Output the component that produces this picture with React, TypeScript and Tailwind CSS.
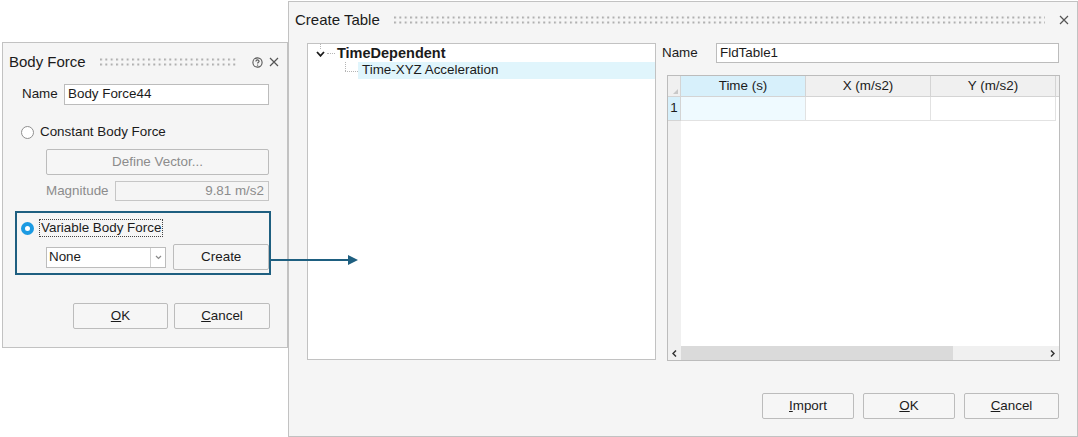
import React from 'react'

const font = { fontFamily: '"Liberation Sans", Arial, sans-serif' }

function Grip({ id }: { id: string }) {
  return (
    <svg className="flex-1 h-[8px]" aria-hidden>
      <defs>
        <pattern id={id} width="5.33" height="5" patternUnits="userSpaceOnUse">
          <rect x="0" y="0.5" width="2" height="2" fill="#b0b0b0" />
        </pattern>
      </defs>
      <rect x="0" y="0" width="100%" height="8" fill={`url(#${id})`} />
    </svg>
  )
}

function CloseIcon() {
  return (
    <svg width="10" height="10" viewBox="0 0 10 10" className="shrink-0">
      <path d="M1 1 L9 9 M9 1 L1 9" stroke="#555" strokeWidth="1.2" />
    </svg>
  )
}

function HelpIcon() {
  return (
    <svg width="11" height="11" viewBox="0 0 11 11" className="shrink-0">
      <circle cx="5.5" cy="5.5" r="4.6" fill="none" stroke="#555" strokeWidth="1.1" />
      <path d="M3.9 4.4 C3.9 3.4 4.6 2.9 5.5 2.9 C6.4 2.9 7.1 3.5 7.1 4.3 C7.1 5.2 5.6 5.4 5.6 6.5" fill="none" stroke="#555" strokeWidth="1.1" />
      <circle cx="5.6" cy="8.1" r="0.7" fill="#555" />
    </svg>
  )
}

function Btn({ children, className = '', disabled = false }: { children: React.ReactNode; className?: string; disabled?: boolean }) {
  return (
    <div
      className={`flex items-center justify-center h-[26px] border border-[#bcbcbc] rounded-[2px] bg-[#f6f6f6] ${disabled ? 'text-[#8c8c8c]' : 'text-[#1b1b1b]'} ${className}`}
    >
      {children}
    </div>
  )
}

function Radio({ checked }: { checked?: boolean }) {
  return checked ? (
    <div className="w-[13px] h-[13px] rounded-full border-[4px] border-[#1b9ae2] bg-white shrink-0" />
  ) : (
    <div className="w-[13px] h-[13px] rounded-full border border-[#8f8f8f] bg-white shrink-0" />
  )
}

function BodyForce() {
  return (
    <div className="mt-[42px] ml-[2px] w-[286px] h-[306px] border border-[#c2c2c2] bg-[#f5f5f5] flex flex-col text-[13.4px] text-[#1b1b1b] shrink-0">
      <div className="h-[38px] flex items-center pl-[6px] pr-[8px] gap-[14px]">
        <span className="text-[15px]">Body Force</span>
        <Grip id="g1" />
        <div className="flex items-center gap-[6px]">
          <HelpIcon />
          <CloseIcon />
        </div>
      </div>
      <div className="mt-[3px] h-[21px] flex items-center ml-[19px]">
        <span className="w-[42px]">Name</span>
        <div className="w-[205px] h-[21px] border border-[#bcbcbc] bg-white flex items-center px-[3px]">Body Force44</div>
      </div>
      <div className="mt-[19px] h-[16px] flex items-center ml-[18px] gap-[6px]">
        <Radio />
        <span>Constant Body Force</span>
      </div>
      <Btn disabled className="mt-[9px] ml-[43px] w-[223px] h-[25px]">Define Vector...</Btn>
      <div className="mt-[6px] h-[20px] flex items-center ml-[43px] text-[#8c8c8c]">
        <span className="w-[69px]">Magnitude</span>
        <div className="w-[154px] h-[20px] border border-[#c6c6c6] bg-[#f5f5f5] flex items-center justify-end px-[4px]">9.81 m/s2</div>
      </div>
      <div className="mt-[10px] ml-[12px] w-[256px] h-[64px] border-2 border-[#1e5f80] flex flex-col">
        <div className="mt-[6px] h-[18px] flex items-center ml-[4px] gap-[5px]">
          <Radio checked />
          <span className="h-[18px] border border-dotted border-[#444] flex items-center px-[1px]">Variable Body Force</span>
        </div>
        <div className="mt-[7px] h-[26px] flex items-center ml-[29px] gap-[7px]">
          <div className="w-[121px] h-[21px] border border-[#bcbcbc] bg-white flex items-center">
            <span className="flex-1 px-[2px]">None</span>
            <div className="w-[15px] h-full border-l border-[#d0d0d0] flex items-center justify-center">
              <svg width="7" height="5" viewBox="0 0 7 5">
                <path d="M1 1 L3.5 3.5 L6 1" fill="none" stroke="#8a8a8a" strokeWidth="1.2" />
              </svg>
            </div>
          </div>
          <Btn className="w-[96px]">Create</Btn>
        </div>
      </div>
      <div className="mt-[28px] ml-[70px] flex gap-[6px]">
        <Btn className="w-[95px]">
          <span>
            <u>O</u>K
          </span>
        </Btn>
        <Btn className="w-[96px]">
          <span>
            <u>C</u>ancel
          </span>
        </Btn>
      </div>
    </div>
  )
}

function Tree() {
  return (
    <div className="w-[349px] h-[317px] border border-[#c2c2c2] bg-white relative text-[#1b1b1b]">
      {/* dotted connector lines */}
      <div className="absolute left-[12px] top-0 h-[5px] border-l border-dotted border-[#b5b5b5]" />
      <div className="absolute left-[19px] top-[9px] w-[8px] border-t border-dotted border-[#b5b5b5]" />
      <div className="absolute left-[37px] top-[18px] h-[9px] border-l border-dotted border-[#b5b5b5]" />
      <div className="absolute left-[37px] top-[27px] w-[13px] border-t border-dotted border-[#b5b5b5]" />
      <div className="flex items-center h-[17px] mt-[1px] pl-[8px]">
        <svg width="9" height="6" viewBox="0 0 9 6" className="shrink-0">
          <path d="M1 1 L4.5 4.8 L8 1" fill="none" stroke="#1b1b1b" strokeWidth="1.8" />
        </svg>
        <span className="ml-[12px] font-bold text-[14.5px]">TimeDependent</span>
      </div>
      <div className="ml-[50px] h-[17px] bg-[#e0f5fc] flex items-center pl-[4px]">Time-XYZ Acceleration</div>
    </div>
  )
}

function Table() {
  const cols = ['Time (s)', 'X (m/s2)', 'Y (m/s2)']
  return (
    <div className="mt-[12px] ml-[5px] w-[393px] h-[286px] border border-[#bcbcbc] bg-white flex flex-col text-[#1b1b1b]">
      <div className="flex-1 flex">
        <div className="w-[13px] bg-[#f0f0f0] flex flex-col shrink-0">
          <div className="h-[21px] border-b border-r border-[#d4d4d4] relative">
            <svg width="5" height="5" viewBox="0 0 5 5" className="absolute right-[2px] bottom-[2px]">
              <path d="M5 0 L5 5 L0 5 Z" fill="#c8c8c8" />
            </svg>
          </div>
          <div className="h-[24px] bg-[#d7f0fb] border-b border-r border-[#d4d4d4] flex items-center justify-center">1</div>
        </div>
        <div className="flex flex-col">
          <div className="flex h-[21px]">
            {cols.map((c, i) => (
              <div
                key={c}
                className={`w-[125px] border-b border-r border-[#d4d4d4] flex items-center justify-center ${i === 0 ? 'bg-[#d7f0fb]' : 'bg-[#f0f0f0]'}`}
              >
                {c}
              </div>
            ))}
          </div>
          <div className="flex h-[24px]">
            {cols.map((c, i) => (
              <div key={c} className={`w-[125px] border-b border-r border-[#e2e2e2] ${i === 0 ? 'bg-[#effaff]' : 'bg-white'}`} />
            ))}
          </div>
        </div>
        <div className="flex-1 flex flex-col">
          <div className="h-[21px] bg-[#f0f0f0] border-b border-[#d4d4d4]" />
        </div>
      </div>
      <div className="h-[14px] bg-[#f0f0f0] flex items-center">
        <div className="w-[13px] flex items-center justify-center">
          <svg width="5" height="7" viewBox="0 0 5 7">
            <path d="M4 0.5 L1 3.5 L4 6.5" fill="none" stroke="#333" strokeWidth="1.5" />
          </svg>
        </div>
        <div className="w-[272px] h-full bg-[#dadada]" />
        <div className="flex-1" />
        <div className="w-[13px] flex items-center justify-center">
          <svg width="5" height="7" viewBox="0 0 5 7">
            <path d="M1 0.5 L4 3.5 L1 6.5" fill="none" stroke="#333" strokeWidth="1.5" />
          </svg>
        </div>
      </div>
    </div>
  )
}

function CreateTable() {
  return (
    <div className="mt-[1px] w-[790px] h-[436px] border border-[#c2c2c2] bg-[#f5f5f5] flex flex-col text-[13.4px] text-[#1b1b1b] shrink-0">
      <div className="h-[36px] flex items-center pl-[6px] pr-[8px] gap-[14px]">
        <span className="text-[15px]">Create Table</span>
        <Grip id="g2" />
        <CloseIcon />
      </div>
      <div className="mt-[5px] ml-[18px] flex">
        <Tree />
        <div className="ml-[6px] flex flex-col">
          <div className="h-[20px] flex items-center">
            <span className="w-[54px]">Name</span>
            <div className="w-[343px] h-[20px] border border-[#bcbcbc] bg-white flex items-center px-[3px]">FldTable1</div>
          </div>
          <Table />
        </div>
      </div>
      <div className="mt-[32px] mr-[18px] flex justify-end gap-[9px]">
        <Btn className="w-[92px]">
          <span>
            <u>I</u>mport
          </span>
        </Btn>
        <Btn className="w-[92px]">
          <span>
            <u>O</u>K
          </span>
        </Btn>
        <Btn className="w-[95px]">
          <span>
            <u>C</u>ancel
          </span>
        </Btn>
      </div>
    </div>
  )
}

export default function App() {
  return (
    <div className="relative w-[1078px] h-[437px] bg-white flex items-start overflow-hidden" style={font}>
      <BodyForce />
      <CreateTable />
      {/* callout arrow from Create button into the Create Table dialog */}
      <svg className="absolute left-[270px] top-[254px]" width="90" height="12" viewBox="0 0 90 12">
        <path d="M0 6 L80 6" stroke="#1e5f80" strokeWidth="2" />
        <path d="M78 1 L88 6 L78 11 Z" fill="#1e5f80" />
      </svg>
    </div>
  )
}
